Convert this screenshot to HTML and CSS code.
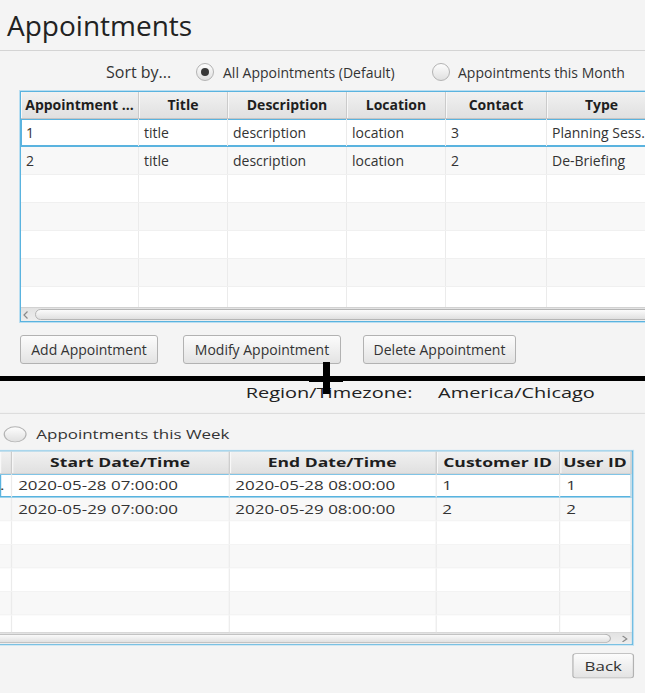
FILE: index.html
```html
<!DOCTYPE html>
<html lang="en">
<head>
<meta charset="utf-8">
<title>Appointments</title>
<link rel="stylesheet" href="styles.css">
</head>
<body>
<div class="page">
  <header class="title-bar"><h1 class="title">Appointments</h1></header>

  <div class="sort-row">
    <span class="sort-label">Sort by...</span>
    <label class="option option-all"><span class="radio checked"></span>All Appointments (Default)</label>
    <label class="option"><span class="radio"></span>Appointments this Month</label>
  </div>

  <div class="table top-table">
    <div class="table-inner">
      <div class="thead">
        <div class="th c-id">Appointment ...</div>
        <div class="th c-title">Title</div>
        <div class="th c-desc">Description</div>
        <div class="th c-loc">Location</div>
        <div class="th c-contact">Contact</div>
        <div class="th c-type">Type</div>
      </div>
      <div class="row selected">
        <div class="td c-id">1</div><div class="td c-title">title</div><div class="td c-desc">description</div><div class="td c-loc">location</div><div class="td c-contact">3</div><div class="td c-type">Planning Sess...</div>
      </div>
      <div class="row odd">
        <div class="td c-id">2</div><div class="td c-title">title</div><div class="td c-desc">description</div><div class="td c-loc">location</div><div class="td c-contact">2</div><div class="td c-type">De-Briefing</div>
      </div>
      <div class="row"><div class="td c-id"></div><div class="td c-title"></div><div class="td c-desc"></div><div class="td c-loc"></div><div class="td c-contact"></div><div class="td c-type"></div></div>
      <div class="row odd"><div class="td c-id"></div><div class="td c-title"></div><div class="td c-desc"></div><div class="td c-loc"></div><div class="td c-contact"></div><div class="td c-type"></div></div>
      <div class="row"><div class="td c-id"></div><div class="td c-title"></div><div class="td c-desc"></div><div class="td c-loc"></div><div class="td c-contact"></div><div class="td c-type"></div></div>
      <div class="row odd"><div class="td c-id"></div><div class="td c-title"></div><div class="td c-desc"></div><div class="td c-loc"></div><div class="td c-contact"></div><div class="td c-type"></div></div>
      <div class="row partial"><div class="td c-id"></div><div class="td c-title"></div><div class="td c-desc"></div><div class="td c-loc"></div><div class="td c-contact"></div><div class="td c-type"></div></div>
      <div class="hscroll">
        <svg class="arrow arrow-left" width="5" height="8" viewBox="0 0 5 8"><path d="M4.5 0.5 L1 4 L4.5 7.5" fill="none" stroke="#8a8a8a" stroke-width="1.2"/></svg>
        <div class="thumb"></div>
      </div>
    </div>
  </div>

  <div class="btn-row">
    <button class="btn btn-add">Add Appointment</button>
    <button class="btn btn-modify">Modify Appointment</button>
    <button class="btn btn-delete">Delete Appointment</button>
  </div>

  <div class="divider"></div>

  <div class="bottom">
    <div class="tz-row">
      <span class="tz-label">Region/Timezone:</span>
      <span class="tz-value">America/Chicago</span>
    </div>

    <div class="week-row">
      <label class="option"><span class="radio radio-lg"></span>Appointments this Week</label>
    </div>

    <div class="table bottom-table">
      <div class="table-inner">
        <div class="thead">
          <div class="th b-pre"></div>
          <div class="th b-start">Start Date/Time</div>
          <div class="th b-end">End Date/Time</div>
          <div class="th b-cust">Customer ID</div>
          <div class="th b-user">User ID</div>
        </div>
        <div class="row selected">
          <div class="td b-pre">.</div><div class="td b-start">2020-05-28 07:00:00</div><div class="td b-end">2020-05-28 08:00:00</div><div class="td b-cust">1</div><div class="td b-user">1</div>
        </div>
        <div class="row odd">
          <div class="td b-pre"></div><div class="td b-start">2020-05-29 07:00:00</div><div class="td b-end">2020-05-29 08:00:00</div><div class="td b-cust">2</div><div class="td b-user">2</div>
        </div>
        <div class="row"><div class="td b-pre"></div><div class="td b-start"></div><div class="td b-end"></div><div class="td b-cust"></div><div class="td b-user"></div></div>
        <div class="row odd"><div class="td b-pre"></div><div class="td b-start"></div><div class="td b-end"></div><div class="td b-cust"></div><div class="td b-user"></div></div>
        <div class="row"><div class="td b-pre"></div><div class="td b-start"></div><div class="td b-end"></div><div class="td b-cust"></div><div class="td b-user"></div></div>
        <div class="row odd"><div class="td b-pre"></div><div class="td b-start"></div><div class="td b-end"></div><div class="td b-cust"></div><div class="td b-user"></div></div>
        <div class="row partial"><div class="td b-pre"></div><div class="td b-start"></div><div class="td b-end"></div><div class="td b-cust"></div><div class="td b-user"></div></div>
        <div class="hscroll">
          <div class="thumb thumb-open-left"></div>
          <svg class="arrow arrow-right" width="5" height="8" viewBox="0 0 5 8"><path d="M0.5 0.5 L4 4 L0.5 7.5" fill="none" stroke="#8a8a8a" stroke-width="1.2"/></svg>
        </div>
      </div>
    </div>

    <div class="back-row">
      <button class="btn">Back</button>
    </div>
  </div>
</div>
</body>
</html>
```

FILE: styles.css
```css
* { box-sizing: border-box; }

html, body {
  margin: 0;
  padding: 0;
  overflow: hidden;
  background: #f4f4f4;
}

body {
  font-family: "Open Sans", "Noto Sans", sans-serif;
  color: #333;
}

.page {
  width: 645px;
  height: 693px;
  overflow: hidden;
  background: #f4f4f4;
}

/* ---------- title ---------- */
.title-bar {
  height: 51px;
  border-bottom: 1px solid #d4d4d4;
  padding-left: 7px;
}

.title {
  margin: 0;
  font-size: 28px;
  font-weight: 400;
  line-height: 50px;
  color: #222;
}

/* ---------- sort options ---------- */
.sort-row {
  display: flex;
  align-items: center;
  height: 39px;
  padding: 3px 0 0 106px;
}

.sort-label {
  width: 90px;
  font-size: 16px;
  color: #333;
}

.option {
  display: flex;
  align-items: center;
  gap: 8px;
  font-size: 14px;
  color: #333;
  white-space: nowrap;
}

.option-all {
  width: 236px;
  gap: 9px;
}

.radio {
  flex: none;
  display: flex;
  align-items: center;
  justify-content: center;
  width: 18px;
  height: 18px;
  border-radius: 50%;
  border: 1px solid #b3b3b3;
  background: linear-gradient(#fdfdfd, #e0e0e0);
}

.radio.checked::after {
  content: "";
  width: 8px;
  height: 8px;
  border-radius: 50%;
  background: #383838;
}

.radio-lg {
  width: 19px;
  height: 19px;
}

/* ---------- tables ---------- */
.table {
  border: 1px solid #b9def1;
}

.top-table {
  width: 640px;
  margin-left: 19px;
}

.table-inner {
  border: 1px solid #5ab3df;
}

.thead,
.row {
  display: flex;
}

.thead {
  height: 27px;
  border-bottom: 1px solid #c4c4c4;
  background: linear-gradient(#f1f1f1, #e0e0e0);
}

.th {
  flex: none;
  font-size: 14px;
  font-weight: 700;
  line-height: 26px;
  color: #1e1e1e;
  text-align: center;
  white-space: nowrap;
  overflow: hidden;
  border-right: 1px solid #cbcbcb;
  box-shadow: inset 1px 0 #f8f8f8;
}

.row {
  height: 28px;
  background: #fff;
  border-bottom: 1px solid #f0f0f0;
}

.row.odd {
  background: #f8f8f8;
}

.row.partial {
  height: 20px;
  border-bottom: 0;
}

.row.selected {
  background: #fff;
  box-shadow: inset 0 0 0 1px #5ab3df;
  border-bottom-color: #5ab3df;
}

.td {
  flex: none;
  font-size: 14px;
  line-height: 27px;
  padding-left: 5px;
  color: #333;
  white-space: nowrap;
  overflow: hidden;
  border-right: 1px solid #ebebeb;
}

.c-id { width: 118px; }
.c-title { width: 89px; }
.c-desc { width: 119px; }
.c-loc { width: 99px; }
.c-contact { width: 101px; }
.c-type { width: 110px; }

.hscroll {
  display: flex;
  align-items: center;
  height: 14px;
  border-top: 1px solid #d2d2d2;
  background: linear-gradient(#e2e2e2, #eeeeee);
}

.arrow { flex: none; display: block; }

.arrow-left { margin: 0 7px 0 2px; }

.arrow-right { margin: 0 3px 0 9px; }

.thumb {
  flex: 1;
  height: 11px;
  border: 1px solid #b5b5b5;
  border-radius: 6px;
  background: linear-gradient(#fbfbfb, #e0e0e0);
}

.thumb-open-left {
  border-left: 0;
  border-top-left-radius: 0;
  border-bottom-left-radius: 0;
}

/* ---------- buttons ---------- */
.btn-row {
  display: flex;
  margin: 12px 0 0 20px;
}

.btn {
  height: 29px;
  padding: 0 9px;
  font-family: "Open Sans", "Noto Sans", sans-serif;
  font-size: 14px;
  color: #333;
  border: 1px solid #b2b2b2;
  border-radius: 3px;
  background: linear-gradient(#fcfcfc, #e3e3e3);
}

.btn-add { width: 138px; }
.btn-modify { width: 158px; margin-left: 25px; }
.btn-delete { width: 153px; margin-left: 22px; }

/* ---------- splice divider with cross marker ---------- */
.divider {
  position: relative;
  z-index: 2;
  height: 5px;
  margin-top: 12px;
  background: #000;
}

.divider::before {
  content: "";
  position: absolute;
  left: 323px;
  top: -14px;
  width: 7px;
  height: 32px;
  background: #000;
}

.divider::after {
  content: "";
  position: absolute;
  left: 309px;
  top: 1px;
  width: 34px;
  height: 5px;
  background: #000;
}

/* ---------- lower (stretched) capture ---------- */
.bottom {
  width: 533px;
  height: 372px;
  transform: scale(1.21, 0.84);
  transform-origin: 0 0;
}

.tz-row {
  display: flex;
  height: 39px;
  padding-left: 203px;
  border-bottom: 1px solid #d6d6d6;
  font-size: 16.5px;
  line-height: 28px;
  color: #222;
}

.tz-label { width: 159px; }

.week-row {
  display: flex;
  align-items: center;
  height: 43px;
  padding: 5px 0 0 3px;
}

.bottom-table {
  width: 523.5px;
  border-left: 0;
}

.bottom-table .table-inner {
  border-left: 0;
}

.bottom-table .th {
  font-size: 14.5px;
}

.b-pre { width: 10px; padding-left: 0; }
.b-start { width: 179.5px; }
.b-end { width: 171px; }
.b-cust { width: 102.5px; }
.b-user { width: 58.5px; }

.back-row {
  display: flex;
  justify-content: flex-end;
  margin-top: 9px;
  padding-right: 9px;
}

.back-row .btn {
  height: 30px;
}
```
